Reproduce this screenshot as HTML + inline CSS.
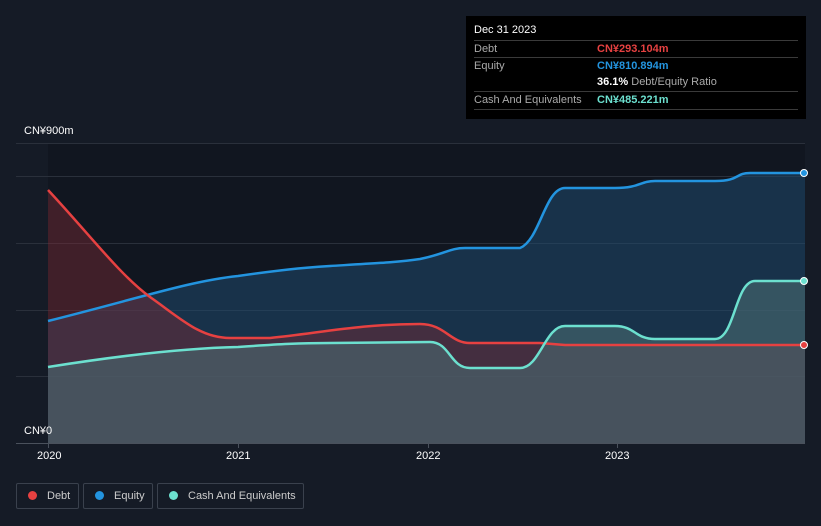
<!DOCTYPE html>
<html><head><meta charset="utf-8"><style>
body{margin:0;width:821px;height:526px;background:#151b26;font-family:"Liberation Sans","Noto Sans CJK SC",sans-serif;overflow:hidden;position:relative}
.t{position:absolute;font-size:11px;color:#fff}
.tip{position:absolute;left:466px;top:16px;width:340px;height:103px;background:#000}
.tip .r{position:absolute;left:8px;right:8px;border-top:1px solid #3a3a3a;height:17px;font-size:11px;color:#aaa;line-height:17px}
.lg{position:absolute;top:483px;height:26px;border:1px solid #3a414d;border-radius:2px;box-sizing:border-box;font-size:11px;color:#ccc;line-height:24px}
.lg i{display:inline-block;width:9px;height:9px;border-radius:50%;margin:0 10px 0 11px;vertical-align:-1px}
</style></head><body>
<svg width="821" height="526" style="position:absolute;left:0;top:0">
<rect x="48" y="143" width="757" height="300" fill="#111620"/>
<g stroke="#2a303b" stroke-width="1">
<line x1="16" x2="805" y1="143.5" y2="143.5"/><line x1="16" x2="805" y1="176.5" y2="176.5"/><line x1="16" x2="805" y1="243.5" y2="243.5"/><line x1="16" x2="805" y1="310.5" y2="310.5"/><line x1="16" x2="805" y1="376.5" y2="376.5"/></g>
<path d="M48,321 C140,298 190,281 238,276 C280,270 300,268 330,266 C380,263 400,262 420,259 C445,254 450,248 465,248 L520,248 C540,240 545,188 565,188 L615,188 C640,188 640,181 655,181 L715,181 C740,181 735,173 750,173 L805,173 L805,443 L48,443Z" fill="#1f4a6e" fill-opacity="0.55"/>
<path d="M48,190 C90,235 120,275 150,297 C180,318 200,338 230,338 L270,338 C320,333 360,324 420,324 C445,324 450,343 470,343 L540,343 L565,345 L805,345 L805,443 L48,443Z" fill="#7a2a36" fill-opacity="0.45"/>
<path d="M48,367 C130,354 190,348 238,347 C280,344 300,343 330,343 L430,342 C450,342 450,368 470,368 L520,368 C540,368 545,326 565,326 L615,326 C635,326 635,339 655,339 L715,339 C735,339 735,281 755,281 L805,281 L805,443 L48,443Z" fill="#4a6b72" fill-opacity="0.6"/>
<path d="M48,321 C140,298 190,281 238,276 C280,270 300,268 330,266 C380,263 400,262 420,259 C445,254 450,248 465,248 L520,248 C540,240 545,188 565,188 L615,188 C640,188 640,181 655,181 L715,181 C740,181 735,173 750,173 L805,173" fill="none" stroke="#2394df" stroke-width="2.5"/>
<path d="M48,190 C90,235 120,275 150,297 C180,318 200,338 230,338 L270,338 C320,333 360,324 420,324 C445,324 450,343 470,343 L540,343 L565,345 L805,345" fill="none" stroke="#e64141" stroke-width="2.5"/>
<path d="M48,367 C130,354 190,348 238,347 C280,344 300,343 330,343 L430,342 C450,342 450,368 470,368 L520,368 C540,368 545,326 565,326 L615,326 C635,326 635,339 655,339 L715,339 C735,339 735,281 755,281 L805,281" fill="none" stroke="#6ce0cf" stroke-width="2.5"/>
<line x1="16" x2="805" y1="443.5" y2="443.5" stroke="#4a515c"/>
<g stroke="#4a515c"><line x1="48.5" x2="48.5" y1="443" y2="448"/><line x1="238.5" x2="238.5" y1="443" y2="448"/><line x1="428.5" x2="428.5" y1="443" y2="448"/><line x1="617.5" x2="617.5" y1="443" y2="448"/></g>
<circle cx="804" cy="173" r="3.5" fill="#2394df" stroke="#fff" stroke-width="1"/>
<circle cx="804" cy="281" r="3.5" fill="#6ce0cf" stroke="#fff" stroke-width="1"/>
<circle cx="804" cy="345" r="3.5" fill="#e64141" stroke="#fff" stroke-width="1"/>
</svg>
<div class="t" style="left:24px;top:125px">CN¥900m</div>
<div class="t" style="left:24px;top:425px">CN¥0</div>
<div class="t" style="left:37px;top:450px">2020</div>
<div class="t" style="left:226px;top:450px">2021</div>
<div class="t" style="left:416px;top:450px">2022</div>
<div class="t" style="left:605px;top:450px">2023</div>
<div class="tip">
<div style="position:absolute;left:8px;top:8px;font-size:11px;color:#fff">Dec 31 2023</div>
<div class="r" style="top:24px">Debt<span style="position:absolute;left:123px;color:#e64141;font-weight:bold">CN¥293.104m</span></div>
<div class="r" style="top:41px">Equity<span style="position:absolute;left:123px;color:#2394df;font-weight:bold">CN¥810.894m</span></div>
<div class="r" style="top:58px;border:0"><span style="position:absolute;left:123px;color:#fff;font-weight:bold">36.1% <span style="color:#aaa;font-weight:normal">Debt/Equity Ratio</span></span></div>
<div class="r" style="top:75px">Cash And Equivalents<span style="position:absolute;left:123px;color:#6ce0cf;font-weight:bold">CN¥485.221m</span></div>
<div style="position:absolute;left:8px;right:8px;top:93px;border-top:1px solid #3a3a3a"></div>
</div>
<div class="lg" style="left:16px;width:63px"><i style="background:#e64141"></i>Debt</div>
<div class="lg" style="left:83px;width:70px"><i style="background:#2394df"></i>Equity</div>
<div class="lg" style="left:157px;width:147px"><i style="background:#6ce0cf"></i>Cash And Equivalents</div>
</body></html>
